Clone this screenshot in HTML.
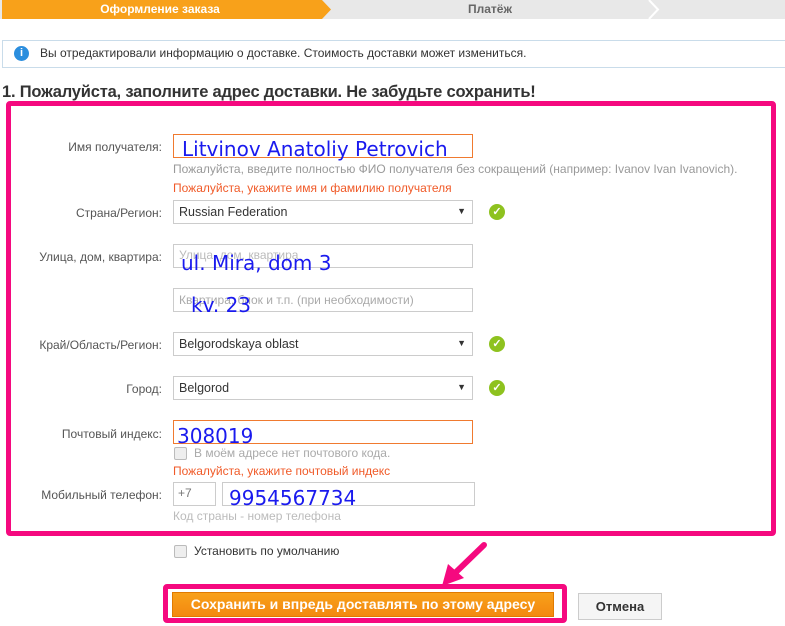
<!DOCTYPE html>
<html><head><meta charset="utf-8"><style>
body{margin:0;width:785px;height:626px;overflow:hidden;background:#fff;font-family:"Liberation Sans",sans-serif;position:relative}
.a{position:absolute}
.lbl{position:absolute;font-size:12px;color:#555;text-align:right;width:160px;left:2px}
.inp{position:absolute;border:1px solid #ccc;background:#fff;box-sizing:border-box;height:24px}
.hw{position:absolute;color:#1a1aee;font-family:"DejaVu Sans",sans-serif;font-size:20px;white-space:nowrap}
.sel{font-size:12.5px;color:#333;padding:4px 5px}
.arr{position:absolute;right:6px;top:5px;font-size:9px;color:#333}
.chk{position:absolute;width:16px;height:16px;border-radius:50%;background:#8ec21f;color:#fff;font-size:11px;text-align:center;line-height:16px;font-weight:bold}
.cb{position:absolute;width:11px;height:11px;border:1px solid #bbb;border-radius:2px;background:#eee}
</style></head><body>
<div class="a" style="left:0;top:0;width:785px;height:19px;background:#e8e8e8"></div>
<div class="a" style="left:2px;top:0;width:318px;height:19px;background:#f8a11a"></div>
<svg class="a" style="left:318px;top:0" width="14" height="19"><polygon points="0,0 4,0 13,9.5 4,19 0,19" fill="#f8a11a"/></svg>
<svg class="a" style="left:647px;top:0" width="14" height="19"><polyline points="2,0 11,9.5 2,19" fill="none" stroke="#fff" stroke-width="2"/></svg>
<div class="a" style="left:0;top:2px;width:320px;text-align:center;color:#fff;font-weight:bold;font-size:12px">Оформление заказа</div>
<div class="a" style="left:330px;top:2px;width:320px;text-align:center;color:#666;font-weight:bold;font-size:12px">Платёж</div>
<div class="a" style="left:2px;top:40px;width:790px;height:28px;border:1px solid #c9dcea;box-sizing:border-box"></div>
<div class="a" style="left:14px;top:46px;width:15px;height:15px;border-radius:50%;background:#2b8ede;color:#fff;font-size:11px;font-weight:bold;text-align:center;line-height:15px">i</div>
<div class="a" style="left:40px;top:46px;font-size:12px;color:#333">Вы отредактировали информацию о доставке. Стоимость доставки может измениться.</div>
<div class="a" style="left:2px;top:83px;font-size:16.5px;font-weight:bold;color:#333;letter-spacing:-0.2px">1. Пожалуйста, заполните адрес доставки. Не забудьте сохранить!</div>
<div class="a" style="left:6px;top:101px;width:770px;height:435px;border:5px solid #f5097f;border-radius:4px;box-sizing:border-box"></div>

<div class="lbl" style="top:140px">Имя получателя:</div>
<div class="inp" style="left:173px;top:134px;width:300px;border-color:#f07a2f"></div>
<div class="hw" style="left:182px;top:137px">Litvinov Anatoliy Petrovich</div>
<div class="a" style="left:173px;top:162px;font-size:12px;color:#999">Пожалуйста, введите полностью ФИО получателя без сокращений (например: Ivanov Ivan Ivanovich).</div>
<div class="a" style="left:173px;top:181px;font-size:12px;color:#f05a28">Пожалуйста, укажите имя и фамилию получателя</div>

<div class="lbl" style="top:206px">Страна/Регион:</div>
<div class="inp sel" style="left:173px;top:200px;width:300px">Russian Federation<span class="arr">▼</span></div>
<div class="chk" style="left:489px;top:204px">✓</div>

<div class="lbl" style="top:250px">Улица, дом, квартира:</div>
<div class="inp" style="left:173px;top:244px;width:300px;font-size:12px;color:#bbb;padding:3px 5px">Улица, дом, квартира</div>
<div class="hw" style="left:181px;top:251px">ul. Mira, dom 3</div>
<div class="inp" style="left:173px;top:288px;width:300px;font-size:12px;color:#aaa;padding:4px 5px">Квартира, блок и т.п. (при необходимости)</div>
<div class="hw" style="left:191px;top:293px">kv. 23</div>

<div class="lbl" style="top:338px">Край/Область/Регион:</div>
<div class="inp sel" style="left:173px;top:332px;width:300px">Belgorodskaya oblast<span class="arr">▼</span></div>
<div class="chk" style="left:489px;top:336px">✓</div>

<div class="lbl" style="top:382px">Город:</div>
<div class="inp sel" style="left:173px;top:376px;width:300px">Belgorod<span class="arr">▼</span></div>
<div class="chk" style="left:489px;top:380px">✓</div>

<div class="lbl" style="top:427px">Почтовый индекс:</div>
<div class="inp" style="left:173px;top:420px;width:300px;border-color:#f07a2f"></div>
<div class="hw" style="left:177px;top:424px">308019</div>
<div class="cb" style="left:174px;top:447px"></div>
<div class="a" style="left:194px;top:446px;font-size:12px;color:#aaa">В моём адресе нет почтового кода.</div>
<div class="a" style="left:173px;top:464px;font-size:12px;color:#f05a28">Пожалуйста, укажите почтовый индекс</div>

<div class="lbl" style="top:488px">Мобильный телефон:</div>
<div class="inp" style="left:173px;top:482px;width:43px;font-size:12px;color:#777;padding:3px 4px">+7</div>
<div class="inp" style="left:222px;top:482px;width:253px"></div>
<div class="hw" style="left:229px;top:486px">9954567734</div>
<div class="a" style="left:173px;top:509px;font-size:12px;color:#bbb">Код страны - номер телефона</div>

<div class="cb" style="left:174px;top:545px"></div>
<div class="a" style="left:194px;top:544px;font-size:12px;color:#333">Установить по умолчанию</div>

<svg class="a" style="left:430px;top:540px" width="60" height="50"><line x1="54" y1="5" x2="24" y2="34" stroke="#f5097f" stroke-width="6" stroke-linecap="round"/><polygon points="12,46 18,24 34,38" fill="#f5097f"/></svg>
<div class="a" style="left:163px;top:584px;width:404px;height:39px;border:5px solid #f5097f;border-radius:4px;box-sizing:border-box"></div>
<div class="a" style="left:172px;top:592px;width:382px;height:25px;background:linear-gradient(#f8a11a,#f38810);border:1px solid #e07a00;box-sizing:border-box;color:#fff;font-weight:bold;font-size:14px;text-align:center;line-height:23px">Сохранить и впредь доставлять по этому адресу</div>
<div class="a" style="left:578px;top:593px;width:84px;height:27px;background:#f5f5f5;border:1px solid #ccc;box-sizing:border-box;color:#333;font-weight:bold;font-size:13px;text-align:center;line-height:25px">Отмена</div>
</body></html>
